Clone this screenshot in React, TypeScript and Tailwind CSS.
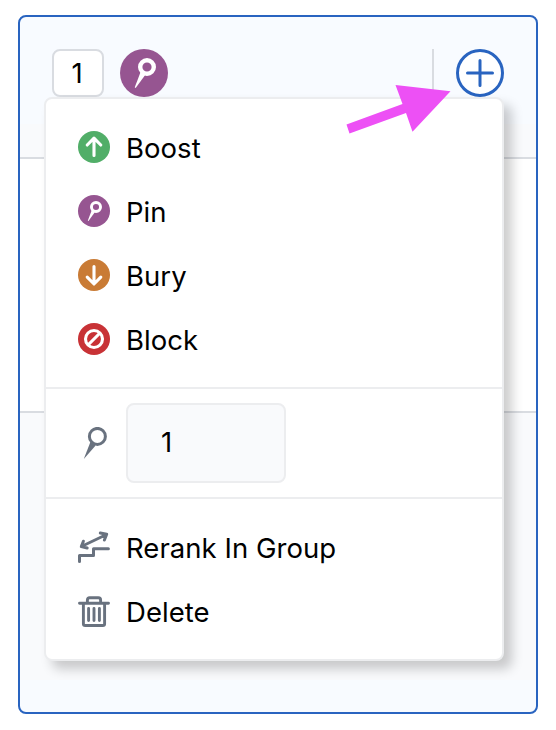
import React from "react";

const WhitePin = ({ className }: { className: string }) => (
  <svg className={className} viewBox="0 0 48 48" fill="none">
    <circle cx="27" cy="18" r="6.8" stroke="white" strokeWidth="4.4" />
    <path d="M20.6 23 L14.8 38.2 Q15 39.5 16 38.6 L25.2 26 Z" fill="white" />
  </svg>
);

const GreyPin = () => (
  <svg className="h-8 w-8" viewBox="0 0 32 32" fill="none">
    <circle cx="19.4" cy="9.4" r="8" stroke="#69727f" strokeWidth="3" />
    <path d="M12.6 14.4 L5.8 32 L17.6 18.4 Z" fill="#69727f" />
  </svg>
);

const Up = () => (
  <svg className="h-8 w-8" viewBox="0 0 32 32" fill="none" stroke="white" strokeWidth="3.1" strokeLinecap="round" strokeLinejoin="round">
    <path d="M16 24.5V7.5M9.2 14L16 7.2L22.8 14" />
  </svg>
);

const Down = () => (
  <svg className="h-8 w-8" viewBox="0 0 32 32" fill="none" stroke="white" strokeWidth="3.1" strokeLinecap="round" strokeLinejoin="round">
    <path d="M16 7.5V24.5M9.2 18.2L16 25L22.8 18.2" />
  </svg>
);

const Ban = () => (
  <svg className="h-8 w-8" viewBox="0 0 32 32" fill="none" stroke="white" strokeWidth="3.1">
    <circle cx="16" cy="16" r="8.5" />
    <path d="M10 22L22 10" />
  </svg>
);

const Stairs = () => (
  <svg className="h-8 w-8" viewBox="0 0 32 32" fill="none" stroke="#69727f" strokeWidth="3" strokeLinecap="round" strokeLinejoin="round">
    <path d="M1.5 30.5V24.6H15.5V17.8H30.4" />
    <path d="M3.4 15.5L28.5 3.5M22.3 2L28.7 3.3L26.4 9M5.4 10.2L3.3 15.6L9.2 17" />
  </svg>
);

const Trash = () => (
  <svg className="h-8 w-8" viewBox="0 0 32 32" fill="none" stroke="#69727f" strokeWidth="2.9" strokeLinecap="round" strokeLinejoin="round">
    <path d="M1.5 8.2H30.5M5.4 8.4V28.7Q5.4 30.5 7.2 30.5H24.8Q26.6 30.5 26.6 28.7V8.4M9.4 8V5Q9.4 2.8 11.6 2.8H20.4Q22.6 2.8 22.6 5V8" />
    <path d="M10.6 13.5V25.5M16 13.5V25.5M21.4 13.5V25.5" />
  </svg>
);

const Item = ({ icon, tone, label }: { icon: React.ReactNode; tone?: string; label: string }) => (
  <li className="flex h-16 items-center gap-4 px-8">
    <span className={`flex h-8 w-8 shrink-0 items-center justify-center rounded-full ${tone ?? ""}`}>{icon}</span>
    <span className="pt-[2px] tracking-[0.04px] whitespace-nowrap">{label}</span>
  </li>
);

export default function App() {
  return (
    <main className="h-[730px] w-[556px] bg-white pt-[15px] pl-[18px] font-['Inter',sans-serif] text-[27.5px] leading-8 text-black">
      <section className="relative flex h-[699px] w-[520px] flex-col rounded-lg border-2 border-[#2964c0] bg-[#f8fbff]">
        <header className="flex h-[142px] flex-col border-b-2 border-[#d9dce1]">
          <div className="flex h-[107px] shrink-0 items-start px-8 pt-8">
            <div className="flex h-12 w-[52px] items-center justify-center rounded-lg border-2 border-[#d9dce1] bg-white pr-[2px] pb-px">1</div>
            <div className="ml-4 h-12 w-12 rounded-full bg-[#965591]">
              <WhitePin className="h-12 w-12" />
            </div>
            <div className="ml-auto h-12 w-[2px] bg-[#d9dce1]" />
            <button className="ml-[22px] h-12 w-12 rounded-full bg-white">
              <svg className="h-12 w-12" viewBox="0 0 48 48" fill="none" stroke="#2964c0" strokeWidth="3" strokeLinecap="round">
                <circle cx="24" cy="24" r="22.5" />
                <path d="M11.5 24H36.5M24 11.5V36.5" />
              </svg>
            </button>
          </div>
          <div className="flex-1 bg-[#f9fafc]" />
        </header>
        <div className="h-[254px] border-b-2 border-[#d9dce1] bg-white" />
        <div className="h-[267px] bg-[#f9fafc]" />

        <div className="absolute top-20 left-6 h-[564px] w-[460px] rounded-lg border-2 border-[#ecedef] bg-white shadow-[8px_8px_12px_rgba(0,0,0,0.2)]">
          <ul className="py-4">
            <Item icon={<Up />} tone="bg-[#51ae68]" label="Boost" />
            <Item icon={<WhitePin className="h-8 w-8" />} tone="bg-[#965591]" label="Pin" />
            <Item icon={<Down />} tone="bg-[#c97b35]" label="Bury" />
            <Item icon={<Ban />} tone="bg-[#c83236]" label="Block" />
          </ul>
          <div className="flex h-28 items-center gap-4 border-y-2 border-[#ecedef] px-8">
            <GreyPin />
            <div className="flex h-20 w-40 items-center rounded-lg border-2 border-[#ecedef] bg-[#f9fafc] pb-[2px] pl-[33px]">1</div>
          </div>
          <ul className="py-4">
            <Item icon={<Stairs />} label="Rerank In Group" />
            <Item icon={<Trash />} label="Delete" />
          </ul>
        </div>

        <svg className="pointer-events-none absolute top-[68px] left-[326px] h-[50px] w-[106px]" viewBox="0 0 106 50">
          <path d="M0.5 39.5L56.5 19L49.5 0L104.5 6.2L66.5 46.8L60 28L3.5 48.5Z" fill="#ed50f5" />
        </svg>
      </section>
    </main>
  );
}
